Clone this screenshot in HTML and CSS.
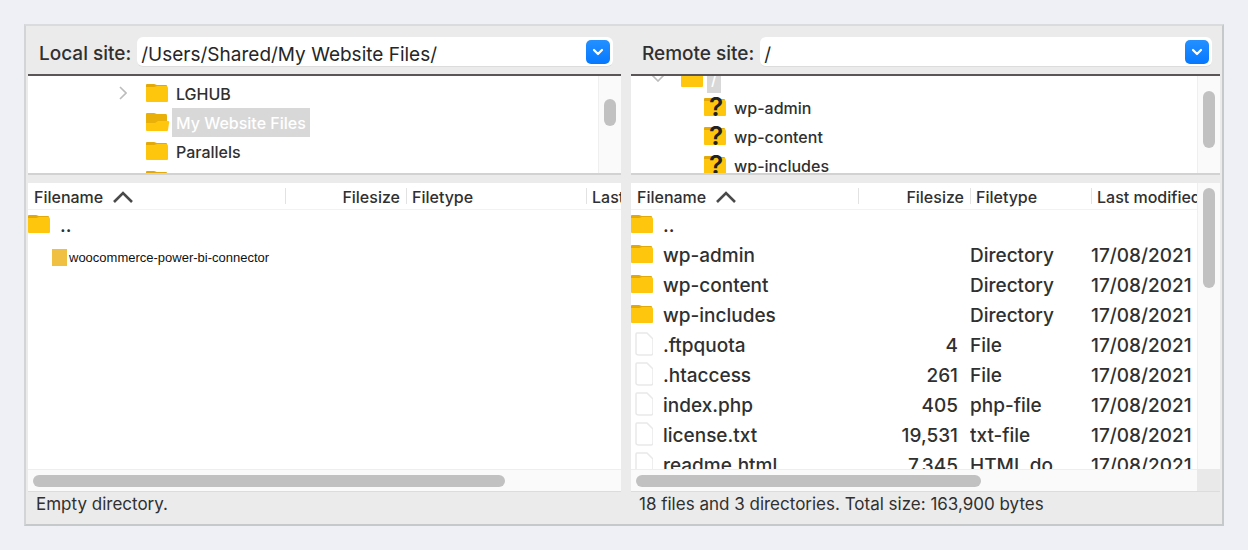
FILE: index.html
```html
<!DOCTYPE html>
<html lang="en">
<head>
<meta charset="utf-8">
<title>File transfer</title>
<link rel="stylesheet" href="styles.css">
</head>
<body>
<svg class="defs" aria-hidden="true">
  <symbol id="folder" viewBox="0 0 22 20"><path fill="#e3a906" d="M0 2Q0 1 1 1H8L11 2H20Q21 2 21 3V10H0Z"/><path fill="#fec60c" d="M0 4H8L11 3H20Q22 3 22 5V18Q22 19 21 19H1Q0 19 0 18Z"/></symbol>
  <symbol id="folder-open" viewBox="0 0 24 20"><path fill="#e8b008" d="M0 2Q0 1 1 1H8L11 2H20Q21 2 21 4V12H0Z"/><path fill="#fec60c" d="M0 11H9L12 9H22Q24 9 23 11L22 18Q22 19 21 19H1Q0 19 0 18Z"/></symbol>
  <symbol id="file" viewBox="0 0 22 26"><path fill="#fff" stroke="#e9e9e9" stroke-width="1.5" d="M6 2H16L22 8V22Q22 24 20 24H8Q5 24 5 22V3Q5 2 6 2Z"/></symbol>
  <symbol id="sort" viewBox="0 0 20 12"><path fill="none" stroke="#4a4a4a" stroke-width="2.6" d="M1 11L10 2L19 11"/></symbol>
  <symbol id="chevron" viewBox="0 0 12 8"><path fill="none" stroke="#fff" stroke-width="2.2" stroke-linecap="round" stroke-linejoin="round" d="M2 2L6 6L10 2"/></symbol>
</svg>
<main class="window">
  <section class="pane pane-local">
    <div class="site">
      <label for="local">Local site:</label>
      <div class="combo">
        <input id="local" type="text" value="/Users/Shared/My Website Files/">
        <button type="button" aria-label="Show local paths"><svg width="12" height="8"><use href="#chevron"/></svg></button>
      </div>
    </div>
    <div class="tree">
      <ul class="nodes nodes-local">
        <li><svg class="twist" width="8" height="14" viewBox="0 0 8 14"><path fill="none" stroke="#bcbcbc" stroke-width="1.6" d="M1 1L7 7L1 13"/></svg><svg class="icon" width="22" height="20"><use href="#folder"/></svg><span class="name">LGHUB</span></li>
        <li><svg class="icon wide" width="24" height="20"><use href="#folder-open"/></svg><span class="name selected">My Website Files</span></li>
        <li><svg class="icon" width="22" height="20"><use href="#folder"/></svg><span class="name">Parallels</span></li>
        <li><svg class="icon" width="22" height="20"><use href="#folder"/></svg></li>
      </ul>
      <div class="vscroll local-tree-scroll"><div class="thumb"></div></div>
    </div>
    <div class="list">
      <div class="rows">
        <table>
          <colgroup><col><col class="l-size"><col class="l-type"><col class="l-date"></colgroup>
          <thead><tr><th>Filename <svg class="sort" width="20" height="12"><use href="#sort"/></svg></th><th class="num">Filesize</th><th>Filetype</th><th>Last modified</th></tr></thead>
          <tbody>
            <tr><td><div class="entry"><svg class="icon" width="22" height="20"><use href="#folder"/></svg><span>..</span></div></td><td></td><td></td><td></td></tr>
            <tr><td colspan="4"><div class="plugin"><span class="swatch"></span>woocommerce-power-bi-connector</div></td></tr>
          </tbody>
        </table>
      </div>
      <div class="hscroll local-h"><div class="thumb"></div></div>
    </div>
    <footer class="status">Empty directory.</footer>
  </section>
  <section class="pane pane-remote">
    <div class="site">
      <label for="remote">Remote site:</label>
      <div class="combo">
        <input id="remote" type="text" value="/">
        <button type="button" aria-label="Show remote paths"><svg width="12" height="8"><use href="#chevron"/></svg></button>
      </div>
    </div>
    <div class="tree">
      <ul class="nodes nodes-remote">
        <li class="root"><svg class="twist" width="14" height="8" viewBox="0 0 14 8"><path fill="none" stroke="#bcbcbc" stroke-width="1.6" d="M1 1L7 7L13 1"/></svg><svg class="icon" width="22" height="20"><use href="#folder"/></svg><span class="name selected">/</span></li>
        <li><span class="unknown"><svg class="icon" width="22" height="20"><use href="#folder"/></svg><b>?</b></span><span class="name">wp-admin</span></li>
        <li><span class="unknown"><svg class="icon" width="22" height="20"><use href="#folder"/></svg><b>?</b></span><span class="name">wp-content</span></li>
        <li><span class="unknown"><svg class="icon" width="22" height="20"><use href="#folder"/></svg><b>?</b></span><span class="name">wp-includes</span></li>
      </ul>
      <div class="vscroll remote-tree-scroll"><div class="thumb"></div></div>
    </div>
    <div class="list list-remote">
      <div class="rows">
        <table>
          <colgroup><col><col class="r-size"><col class="r-type"><col class="r-date"></colgroup>
          <thead><tr><th>Filename <svg class="sort" width="20" height="12"><use href="#sort"/></svg></th><th class="num">Filesize</th><th>Filetype</th><th>Last modified</th></tr></thead>
          <tbody>
            <tr><td><div class="entry"><svg class="icon" width="22" height="20"><use href="#folder"/></svg><span>..</span></div></td><td></td><td></td><td></td></tr>
            <tr><td><div class="entry"><svg class="icon" width="22" height="20"><use href="#folder"/></svg><span>wp-admin</span></div></td><td></td><td>Directory</td><td>17/08/2021</td></tr>
            <tr><td><div class="entry"><svg class="icon" width="22" height="20"><use href="#folder"/></svg><span>wp-content</span></div></td><td></td><td>Directory</td><td>17/08/2021</td></tr>
            <tr><td><div class="entry"><svg class="icon" width="22" height="20"><use href="#folder"/></svg><span>wp-includes</span></div></td><td></td><td>Directory</td><td>17/08/2021</td></tr>
            <tr><td><div class="entry"><svg class="icon" width="22" height="26"><use href="#file"/></svg><span>.ftpquota</span></div></td><td class="num">4</td><td>File</td><td>17/08/2021</td></tr>
            <tr><td><div class="entry"><svg class="icon" width="22" height="26"><use href="#file"/></svg><span>.htaccess</span></div></td><td class="num">261</td><td>File</td><td>17/08/2021</td></tr>
            <tr><td><div class="entry"><svg class="icon" width="22" height="26"><use href="#file"/></svg><span>index.php</span></div></td><td class="num">405</td><td>php-file</td><td>17/08/2021</td></tr>
            <tr><td><div class="entry"><svg class="icon" width="22" height="26"><use href="#file"/></svg><span>license.txt</span></div></td><td class="num">19,531</td><td>txt-file</td><td>17/08/2021</td></tr>
            <tr><td><div class="entry"><svg class="icon" width="22" height="26"><use href="#file"/></svg><span>readme.html</span></div></td><td class="num">7,345</td><td>HTML do</td><td>17/08/2021</td></tr>
          </tbody>
        </table>
      </div>
      <div class="vscroll remote-list-scroll"><div class="thumb"></div></div>
      <div class="hscroll remote-h"><div class="thumb"></div></div>
      <div class="corner"></div>
    </div>
    <footer class="status">18 files and 3 directories. Total size: 163,900 bytes</footer>
  </section>
</main>
</body>
</html>
```
FILE: styles.css
```css
* { box-sizing: border-box; }
body {
  margin: 0;
  padding: 24px;
  height: 100vh;
  background: #eff0f5;
  color: #303030;
  font: 17px/24px Inter, "Liberation Sans", sans-serif;
}
svg { display: block; flex: none; }
.defs { position: absolute; width: 0; height: 0; }

.window {
  display: flex;
  gap: 10px;
  height: 100%;
  padding: 0 2px;
  background: #ebebeb;
  border: 2px solid #c6c9ca;
  border-top-color: #dadbdc;
  border-left-color: #d2d4d6;
}
.pane { display: flex; flex-direction: column; min-width: 0; }
.pane-local { flex: 593 1 0; }
.pane-remote { flex: 589 1 0; }

.site {
  display: flex;
  align-items: center;
  gap: 6px;
  height: 50px;
  padding: 4px 8px 0 11px;
  border-bottom: 2px solid #5a5657;
}
.site label { padding-top: 3px; font-size: 19px; font-weight: 500; }
.combo {
  display: flex;
  align-items: center;
  flex: 1;
  height: 30px;
  padding-right: 3px;
  background: #fff;
  border-radius: 6px;
  border-bottom: 1px solid #dcdcdc;
}
.combo input {
  flex: 1;
  min-width: 0;
  padding: 6px 4px 0;
  border: 0;
  outline: 0;
  background: none;
  color: #262626;
  font: 19px/24px Inter, "Liberation Sans", sans-serif;
}
.combo button {
  display: grid;
  place-items: center;
  width: 24px;
  height: 24px;
  padding: 0;
  border: 0;
  border-radius: 5px;
  background: linear-gradient(#2490ff, #0578ff);
}

.tree {
  display: flex;
  height: 99px;
  background: #fff;
  border-bottom: 2px solid #d2d2d2;
  overflow: hidden;
}
.nodes { flex: 1; margin: 0; padding: 0; list-style: none; }
.nodes li { display: flex; align-items: center; height: 29px; }
.nodes-local { padding: 3px 0 0 91px; }
.nodes-local li { padding-bottom: 1px; }
.nodes-local .name { padding-top: 3px; }
.nodes-local .icon { margin-right: 4px; }
.nodes-local .icon.wide { margin-right: 2px; }
.nodes-local .icon:first-child { margin-left: 27px; }
.nodes-local .twist { margin-right: 19px; }
/* scrolled down so that the root row is partly hidden */
.nodes-remote { margin-top: -13px; padding-left: 73px; }
.nodes-remote .root { margin-left: -53px; }
.nodes-remote .twist { margin-right: 16px; }
.nodes-remote .root .icon { margin-right: 4px; }
.name { padding: 2px 4px; font-size: 16px; font-weight: 500; }
.nodes-remote .name { padding-top: 4px; }
.selected { background: #d8d8d8; color: #fff; }
.unknown { display: grid; margin-right: 4px; }
.unknown .icon, .unknown b { grid-area: 1 / 1; }
.unknown b { padding-left: 5px; color: #222; font-size: 26px; font-weight: 600; line-height: 20px; }

.vscroll { flex: none; width: 23px; padding: 0 5px; background: #fafafa; border-left: 1px solid #efefef; }
.thumb { background: #c1c1c1; border-radius: 6px; }
.vscroll .thumb { width: 12px; }
.local-tree-scroll { padding-top: 23px; }
.local-tree-scroll .thumb { height: 27px; }
.remote-tree-scroll { padding-top: 15px; }
.remote-tree-scroll .thumb { height: 57px; }
.remote-list-scroll { padding-top: 5px; }
.remote-list-scroll .thumb { height: 100px; }

.list {
  display: grid;
  flex: 1;
  grid-template-rows: minmax(0, 1fr) 22px;
  min-height: 0;
  margin-top: 8px;
  background: #fff;
}
.list-remote { grid-template-columns: minmax(0, 1fr) 23px; }
.rows { overflow: hidden; }
.hscroll { padding: 5px 5px 0; background: #fafafa; border-top: 1px solid #eee; }
.hscroll .thumb { height: 12px; }
.local-h .thumb { width: 81%; }
.remote-h .thumb { width: 62%; }
.corner { background: #e9e9e9; }

table { width: 100%; table-layout: fixed; border-collapse: collapse; }
.l-size { width: 121px; }
.l-type { width: 180px; }
.l-date { width: 35px; }
.r-size { width: 112px; }
.r-type { width: 121px; }
.r-date { width: 106px; }
th, td { padding: 0; text-align: left; white-space: nowrap; overflow: hidden; }
th {
  height: 26px;
  padding: 2px 6px 0;
  border-bottom: 1px solid #f2f2f2;
  background: linear-gradient(#e2e2e2, #e2e2e2) left 5px / 1px 16px no-repeat;
  font-size: 16px;
  font-weight: 500;
}
th:first-child { background: none; }
.sort { display: inline-block; margin-left: 6px; }
td { height: 30px; padding-top: 2px; font-size: 19px; font-weight: 500; }
td:first-child { padding-top: 0; }
.num { text-align: right; }
td.num { padding-right: 12px; }
.entry { display: flex; align-items: center; gap: 10px; height: 30px; padding-bottom: 2px; }
.entry span { padding-top: 4px; }
.plugin {
  display: flex;
  align-items: center;
  gap: 2px;
  padding: 4px 0 0 24px;
  color: #111;
  font: 13px/17px "Liberation Sans", Arial, sans-serif;
}
.swatch { width: 15px; height: 17px; background: #f0c043; }

.status {
  height: 33px;
  padding: 0 8px;
  border-top: 1px solid #dcdcdc;
  font-size: 17px;
}
```
